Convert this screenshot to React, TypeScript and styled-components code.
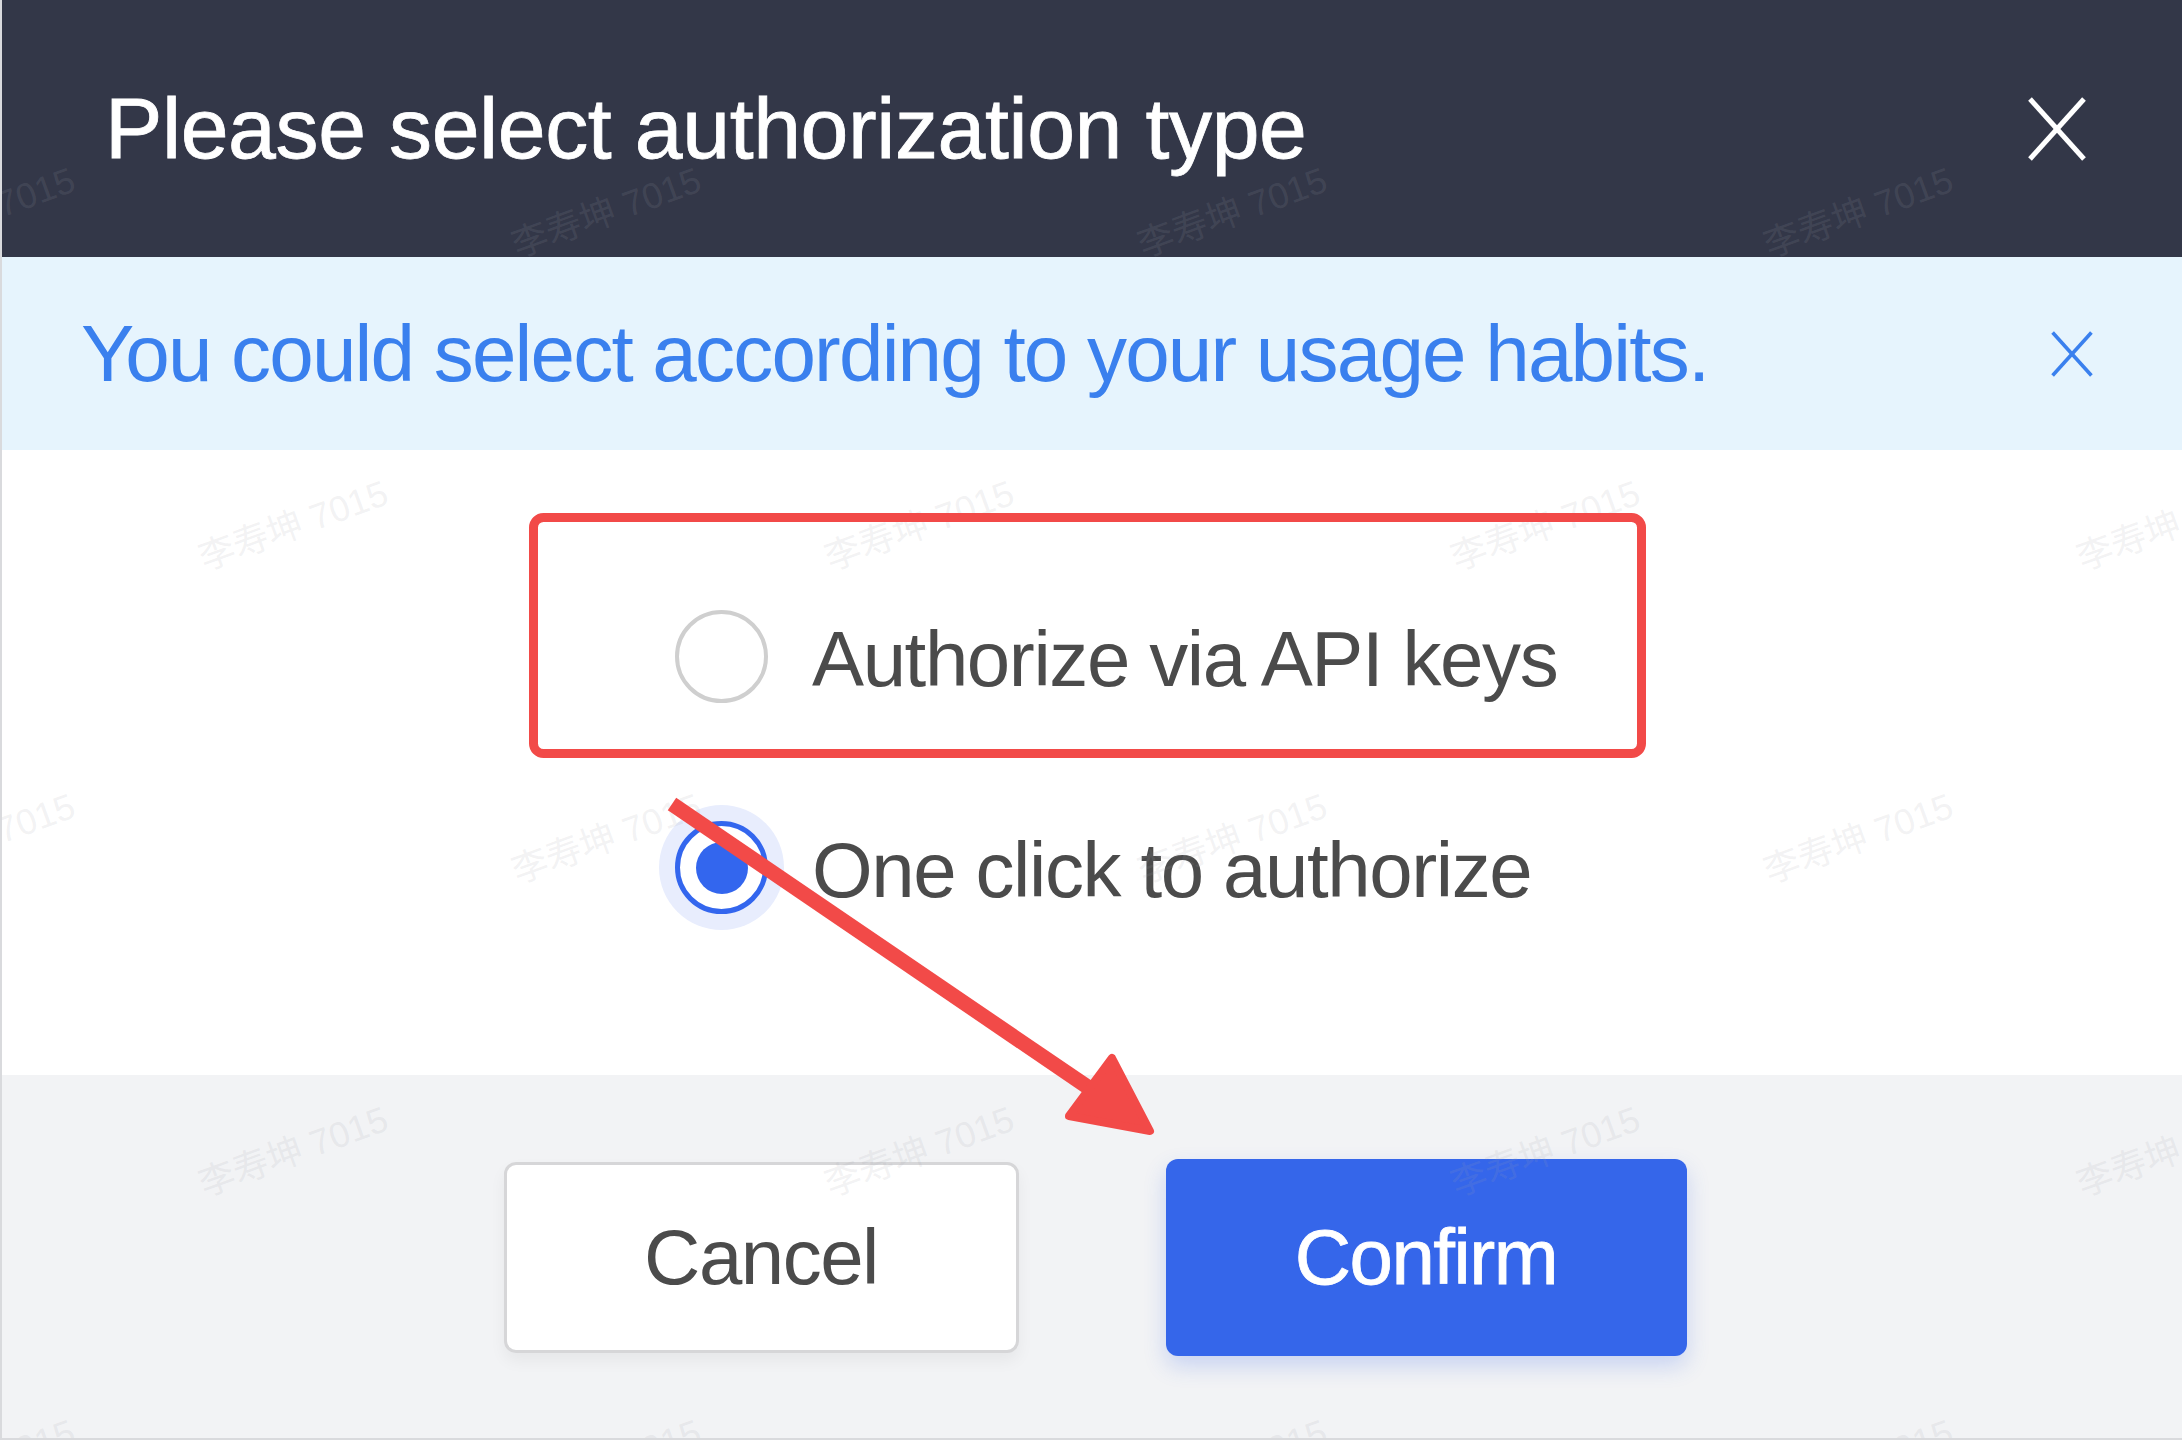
import styled, { createGlobalStyle } from "styled-components";

const GlobalStyle = createGlobalStyle`
  html, body {
    margin: 0;
    padding: 0;
    background: #ffffff;
  }
  body {
    font-family: "Liberation Sans", Arial, "Noto Sans CJK SC", sans-serif;
  }
  * {
    box-sizing: border-box;
  }
`;

const Dialog = styled.div`
  position: relative;
  display: flex;
  flex-direction: column;
  width: 2182px;
  height: 1440px;
  overflow: hidden;
  background: #ffffff;

  &::after {
    content: "";
    position: absolute;
    inset: 0;
    border-left: 2px solid #d9dadd;
    border-bottom: 2px solid #d9dadd;
    pointer-events: none;
  }
`;

const Header = styled.header`
  flex-shrink: 0;
  display: flex;
  align-items: center;
  justify-content: space-between;
  height: 257px;
  padding: 0 95px 0 105px;
  background: #333748;
`;

const Title = styled.h1`
  margin: 0;
  font-size: 86px;
  font-weight: 400;
  letter-spacing: -0.4px;
  color: #ffffff;
  -webkit-text-stroke: 0.8px #ffffff;
`;

const CloseButton = styled.button<{ $color: string; $w: number; $h: number }>`
  display: flex;
  padding: 0;
  border: 0;
  background: none;
  cursor: pointer;
  svg {
    width: ${(p) => p.$w}px;
    height: ${(p) => p.$h}px;
    stroke: ${(p) => p.$color};
  }
`;

const Notice = styled.div`
  flex-shrink: 0;
  display: flex;
  align-items: center;
  justify-content: space-between;
  height: 193px;
  padding: 0 88px 0 81px;
  background: #e6f4fd;
`;

const NoticeText = styled.p`
  margin: 0;
  font-size: 80px;
  letter-spacing: -1.8px;
  color: #3a80ee;
`;

const Body = styled.div`
  flex-shrink: 0;
  display: flex;
  flex-direction: column;
  gap: 118px;
  height: 625px;
  padding: 160px 0 0 675px;
  background: #ffffff;
`;

const Option = styled.label`
  display: flex;
  align-items: center;
  gap: 44px;
  height: 93px;
  cursor: pointer;
`;

const Radio = styled.span<{ $checked?: boolean }>`
  position: relative;
  flex-shrink: 0;
  width: 93px;
  height: 93px;
  border-radius: 50%;
  border: ${(p) => (p.$checked ? "5px solid #3366ee" : "4px solid #cfcfcf")};
  background: #ffffff;
  box-shadow: ${(p) => (p.$checked ? "0 0 0 16px #e8edfd" : "none")};

  &::after {
    content: "";
    position: absolute;
    left: 50%;
    top: 50%;
    width: 52px;
    height: 52px;
    margin: -26px 0 0 -26px;
    border-radius: 50%;
    background: #3366ee;
    display: ${(p) => (p.$checked ? "block" : "none")};
  }
`;

const OptionText = styled.span`
  padding-top: 6px;
  font-size: 78px;
  letter-spacing: -1.4px;
  color: #4b4b4b;
  white-space: nowrap;
`;

const Footer = styled.footer`
  flex: 1;
  display: flex;
  align-items: center;
  justify-content: center;
  gap: 147px;
  padding: 0 0 0 8px;
  background: #f2f3f5;
`;

const Button = styled.button<{ $primary?: boolean }>`
  display: flex;
  align-items: center;
  justify-content: center;
  width: ${(p) => (p.$primary ? 521 : 515)}px;
  height: ${(p) => (p.$primary ? 197 : 191)}px;
  border-radius: 12px;
  border: ${(p) => (p.$primary ? "0" : "3px solid #d6d6d8")};
  background: ${(p) => (p.$primary ? "#3566ea" : "#ffffff")};
  color: ${(p) => (p.$primary ? "#ffffff" : "#4b4b4b")};
  box-shadow: ${(p) =>
    p.$primary
      ? "0 10px 22px rgba(53, 102, 234, 0.22)"
      : "0 8px 16px rgba(0, 0, 0, 0.05)"};
  font-family: inherit;
  font-size: 78px;
  letter-spacing: -1.5px;
  -webkit-text-stroke: ${(p) => (p.$primary ? "0.8px #ffffff" : "0")};
  cursor: pointer;
`;

const WatermarkLayer = styled.div`
  position: absolute;
  inset: 0;
  padding-top: 52px;
  pointer-events: none;
  overflow: hidden;
`;

const WatermarkRow = styled.div<{ $shift: number }>`
  display: flex;
  height: 313px;
  margin-left: ${(p) => p.$shift}px;
`;

const WatermarkCell = styled.div`
  flex-shrink: 0;
  display: flex;
  align-items: center;
  justify-content: center;
  width: 626px;
  span {
    transform: rotate(-20deg);
    font-family: "Liberation Sans", "Noto Sans CJK SC", sans-serif;
    font-size: 36px;
    white-space: nowrap;
    color: rgba(160, 162, 170, 0.14);
  }
`;

const Annotations = styled.svg`
  position: absolute;
  left: 0;
  top: 0;
  width: 2182px;
  height: 1440px;
  pointer-events: none;
`;

function CrossIcon() {
  return (
    <svg viewBox="0 0 60 64" fill="none" strokeWidth="5" strokeLinecap="butt">
      <line x1="3" y1="2" x2="57" y2="62" />
      <line x1="57" y1="2" x2="3" y2="62" />
    </svg>
  );
}

const rows = [0, 1, 2, 3, 4];

export default function App() {
  return (
    <>
      <GlobalStyle />
      <Dialog>
        <Header>
          <Title>Please select authorization type</Title>
          <CloseButton $color="#ffffff" $w={60} $h={64} aria-label="close">
            <CrossIcon />
          </CloseButton>
        </Header>
        <Notice>
          <NoticeText>You could select according to your usage habits.</NoticeText>
          <CloseButton $color="#3a80ee" $w={44} $h={46} aria-label="dismiss">
            <CrossIcon />
          </CloseButton>
        </Notice>
        <Body>
          <Option>
            <Radio />
            <OptionText>Authorize via API keys</OptionText>
          </Option>
          <Option>
            <Radio $checked />
            <OptionText>One click to authorize</OptionText>
          </Option>
        </Body>
        <Footer>
          <Button>Cancel</Button>
          <Button $primary>Confirm</Button>
        </Footer>

        <WatermarkLayer>
          {rows.map((r) => (
            <WatermarkRow key={r} $shift={r % 2 === 0 ? -334 : -21}>
              {[0, 1, 2, 3, 4].map((c) => (
                <WatermarkCell key={c}>
                  <span>李寿坤 7015</span>
                </WatermarkCell>
              ))}
            </WatermarkRow>
          ))}
        </WatermarkLayer>

        <Annotations viewBox="0 0 2182 1440">
          <rect
            x="533.5"
            y="517.5"
            width="1108"
            height="236"
            rx="10"
            fill="none"
            stroke="#f24a48"
            strokeWidth="9"
          />
          <line
            x1="672"
            y1="804"
            x2="1095"
            y2="1092"
            stroke="#f24a48"
            strokeWidth="15"
          />
          <polygon
            points="1150,1131 1069,1116 1112,1058"
            fill="#f24a48"
            stroke="#f24a48"
            strokeWidth="8"
            strokeLinejoin="round"
          />
        </Annotations>
      </Dialog>
    </>
  );
}
